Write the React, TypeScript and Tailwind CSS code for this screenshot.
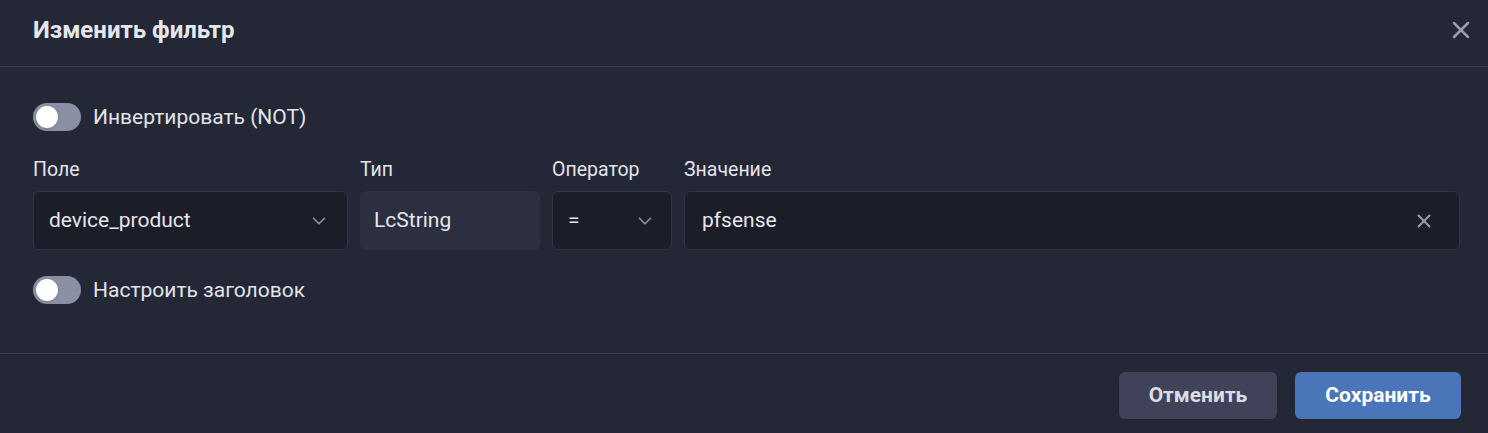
import { ChevronDown, X } from "lucide-react";

function Toggle({ label }: { label: string }) {
  return (
    <label className="flex items-center gap-3 select-none">
      <span className="relative flex h-[28px] w-[48px] items-center rounded-full bg-[#8b8fa3] px-[3px]">
        <span className="h-[22px] w-[22px] rounded-full bg-white shadow" />
      </span>
      <span className="text-[21px] leading-[28px] text-[#e3e4ea]">{label}</span>
    </label>
  );
}

function Field({ label, className, children }: { label: string; className: string; children: React.ReactNode }) {
  return (
    <div className={className}>
      <div className="mb-[9px] text-[19.5px] leading-[24px] text-[#e3e4ea]">{label}</div>
      {children}
    </div>
  );
}

export default function App() {
  return (
    <div className="min-h-screen w-full bg-[#242736] font-['Roboto',sans-serif] text-[#e3e4ea]">
      {/* Header */}
      <div className="flex h-[67px] items-center justify-between border-b border-[#393c53] pb-[6px] pl-[33px] pr-[13px]">
        <h2 className="text-[24px] font-bold text-[#e6e7ec]">Изменить фильтр</h2>
        <button className="text-[#9a9dab]">
          <X size={28} strokeWidth={2.2} />
        </button>
      </div>

      {/* Body */}
      <div className="border-b border-[#393c53] pl-[33px] pr-[28px] pb-[49px] pt-[36px]">
        <Toggle label="Инвертировать (NOT)" />

        <div className="mt-[27px] flex gap-[12px]">
          <Field label="Поле" className="w-[315px] shrink-0">
            <div className="flex h-[59px] items-center justify-between rounded-md border border-[#30334a] bg-[#1b1d29] pl-[15px] pr-[17px]">
              <span className="text-[21px] text-[#e6e7ec]">device_product</span>
              <ChevronDown size={22} strokeWidth={1.8} className="text-[#8e91a0]" />
            </div>
          </Field>
          <Field label="Тип" className="w-[180px] shrink-0">
            <div className="flex h-[59px] items-center rounded-md bg-[#2c2f40] pl-[14px]">
              <span className="text-[21px] text-[#e6e7ec]">LcString</span>
            </div>
          </Field>
          <Field label="Оператор" className="w-[120px] shrink-0">
            <div className="flex h-[59px] items-center justify-between rounded-md border border-[#30334a] bg-[#1b1d29] pl-[15px] pr-[15px]">
              <span className="text-[21px] text-[#e6e7ec]">=</span>
              <ChevronDown size={22} strokeWidth={1.8} className="text-[#8e91a0]" />
            </div>
          </Field>
          <Field label="Значение" className="flex-1">
            <div className="flex h-[59px] items-center justify-between rounded-md border border-[#30334a] bg-[#1b1d29] pl-[17px] pr-[24px]">
              <span className="text-[21px] text-[#e6e7ec]">pfsense</span>
              <X size={22} strokeWidth={2.2} className="text-[#9a9dab]" />
            </div>
          </Field>
        </div>

        <div className="mt-[26px]">
          <Toggle label="Настроить заголовок" />
        </div>
      </div>

      {/* Footer */}
      <div className="flex justify-end gap-[18px] pr-[27px] pt-[18px] pb-[14px]">
        <button className="h-[47px] w-[158px] rounded-md bg-[#3f4259] text-[21px] font-bold text-[#dcdde3]">
          Отменить
        </button>
        <button className="h-[47px] w-[166px] rounded-md bg-[#4a76b9] text-[21px] font-bold text-white">
          Сохранить
        </button>
      </div>
    </div>
  );
}
